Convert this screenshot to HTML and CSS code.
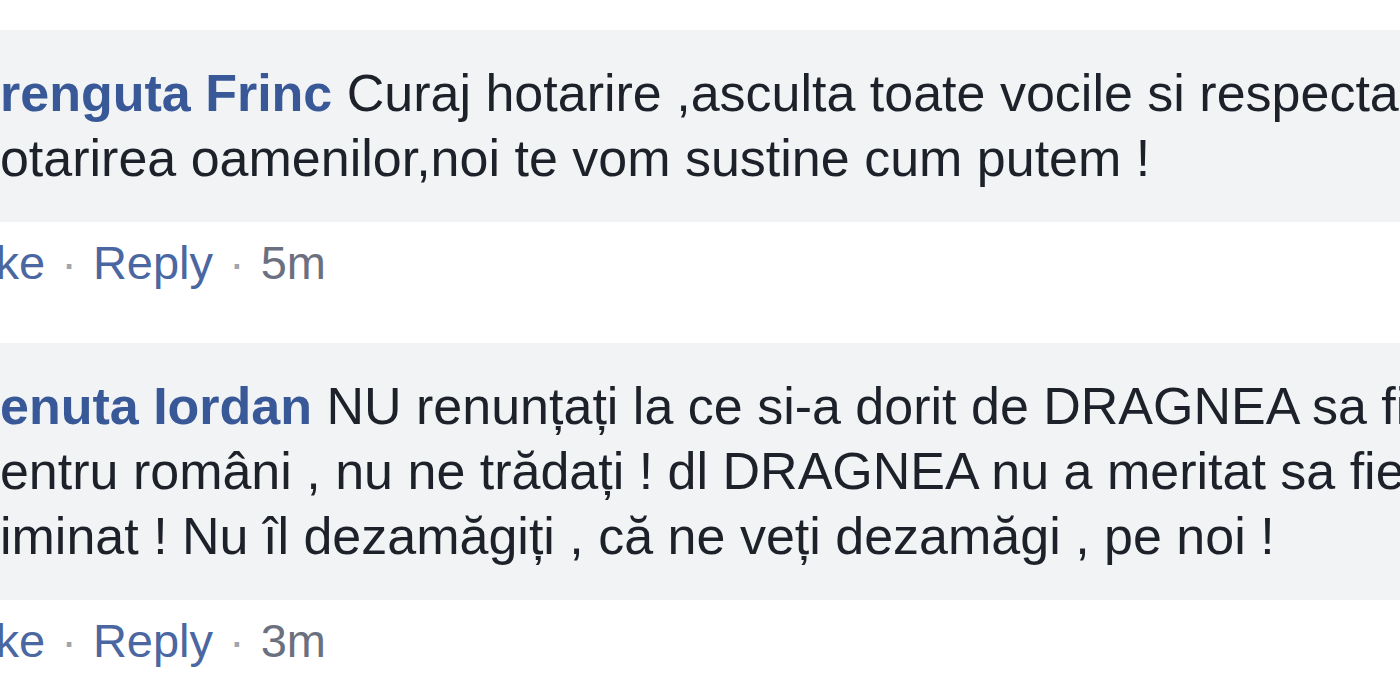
FILE: index.html
```html
<!DOCTYPE html>
<html lang="ro">
<head>
    <meta charset="UTF-8">
    <meta name="viewport" content="width=device-width, initial-scale=1.0">
    <title>Comentarii</title>
    <link rel="stylesheet" href="styles.css">
</head>
<body>
    <div class="feed">
        <div class="comment">
            <div class="bubble">
                <div class="line"><a class="author" href="#">renguta Frinc</a> Curaj hotarire ,asculta toate vocile si respecta</div>
                <div class="line clip">hotarirea oamenilor,noi te vom sustine cum putem !</div>
            </div>
            <div class="actions">
                <a href="#">Like</a><span class="dot">·</span><a href="#">Reply</a><span class="dot">·</span><span class="time">5m</span>
            </div>
        </div>

        <div class="comment">
            <div class="bubble">
                <div class="line"><a class="author" href="#">enuta Iordan</a> NU renunțați la ce si-a dorit de DRAGNEA sa fie</div>
                <div class="line clip">pentru români , nu ne trădați ! dl DRAGNEA nu a meritat sa fie</div>
                <div class="line">iminat ! Nu îl dezamăgiți , că ne veți dezamăgi , pe noi !</div>
            </div>
            <div class="actions">
                <a href="#">Like</a><span class="dot">·</span><a href="#">Reply</a><span class="dot">·</span><span class="time">3m</span>
            </div>
        </div>
    </div>
</body>
</html>
```

FILE: styles.css
```css
body {
    margin: 0;
    background-color: #ffffff;
    font-family: "Liberation Sans", Arial, sans-serif;
    overflow: hidden;
}

.feed {
    padding-top: 30px;
}

.comment + .comment {
    margin-top: 48px;
}

/* grey comment bubble, runs past the right edge */
.bubble {
    background-color: #f2f3f5;
    padding: 31px 0;
    width: 1600px;
}

.line {
    font-size: 52px;
    line-height: 65px;
    color: #1d2129;
    white-space: nowrap;
}

.line.clip {
    margin-left: -29px;
}

.author {
    color: #385898;
    font-weight: bold;
    text-decoration: none;
}

.actions {
    font-size: 47px;
    line-height: 65px;
    margin-top: 8px;
    margin-left: -41px;
    color: #90949c;
    white-space: nowrap;
}

.actions a {
    color: #4b67a1;
    text-decoration: none;
}

.dot {
    padding: 0 16px;
    color: #a0a4ac;
}

.time {
    color: #6b7080;
}
```
